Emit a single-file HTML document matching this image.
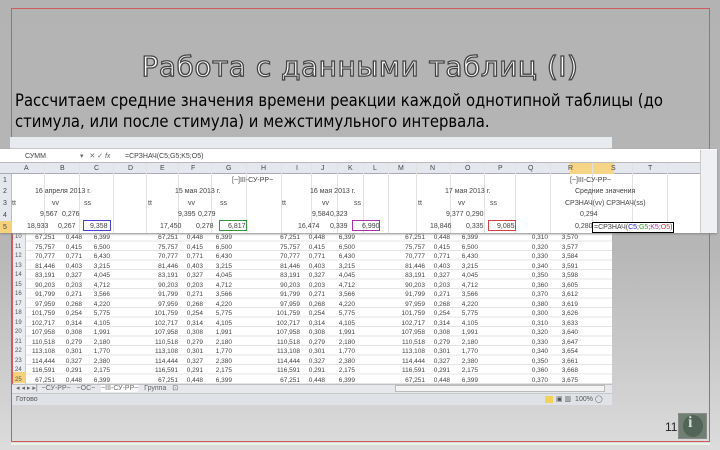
<!DOCTYPE html>
<html><head><meta charset="utf-8"><style>
*{margin:0;padding:0;box-sizing:border-box}
body{width:720px;height:450px;overflow:hidden;position:relative;font-family:"Liberation Sans",sans-serif;background:linear-gradient(#b3b3b3 0,#b6b6b6 55%,#cfcfcf 85%,#dcdcdc 100%)}
.abs{position:absolute}
.title{left:0;width:720px;top:50px;text-align:center;font-size:28px;color:#fff;font-weight:normal;letter-spacing:0.5px;-webkit-text-stroke:1.3px #444;font-family:"DejaVu Sans","Liberation Sans",sans-serif}
.body{left:15px;top:90px;font-size:16.5px;line-height:21px;color:#000;font-family:"DejaVu Sans Condensed","Liberation Sans Narrow","Liberation Sans",sans-serif;letter-spacing:0px}
.sheet{background:#fff}
.t{position:absolute;font-size:7px;color:#444;white-space:nowrap;line-height:9px}
.r{text-align:right}
</style></head><body>
<div class="abs" style="left:11px;top:8px;width:699px;height:434px;border:1.5px solid #cf5b5b"></div>
<div class="abs" style="left:11px;top:443px;width:699px;height:2px;background:#eaf3ea"></div>
<div class="abs title">Работа с данными таблиц (I)</div>
<div class="abs body">Рассчитаем средние значения времени реакции каждой однотипной таблицы (до<br>стимула, или после стимула) и межстимульного интервала.</div>

<div class="abs" style="left:10px;top:137px;width:602px;height:12px;background:#e7eaee;border-bottom:1px solid #ccc"></div>

<div class="abs sheet" style="left:12px;top:232px;width:600px;height:152px;background:#fff;background-image:repeating-linear-gradient(#fff 0,#fff 8.5px,#e4e4e4 8.5px,#e4e4e4 9.5px)"></div>
<div class="abs" style="left:11px;top:232px;width:2px;height:152px;background:#cf5b5b"></div>
<div class="abs" style="left:13px;top:232px;width:13px;height:152px;background:#e9ecf0;border-right:1px solid #c8c8c8"></div>
<div class="abs" style="left:13px;top:372px;width:13px;height:11px;background:#f6d17c"></div>
<div id="rows"></div>
<div class="abs" style="left:12px;top:384px;width:600px;height:9px;background:#e6e8ec;border-top:1px solid #c0c0c0"></div>
<div class="t" style="left:16px;top:384px;color:#666">◂ ◂ ▸ ▸| &nbsp;~СУ-РР~ &nbsp; ~ОС~ &nbsp; <span style="background:#fff">~III-СУ-РР~</span> &nbsp; Группа &nbsp; ⊡</div>
<div class="abs" style="left:395px;top:385px;width:210px;height:7px;background:#f4f4f4;border:1px solid #bbb"></div>
<div class="abs" style="left:12px;top:393px;width:600px;height:12px;background:#dfe2e6;border-top:1px solid #c8c8c8"></div>
<div class="t" style="left:16px;top:395px;color:#555">Готово</div>
<div class="abs" style="left:545px;top:396px;width:8px;height:7px;background:#f3d25a"></div>
<div class="t" style="left:556px;top:395px;color:#555">▣ ▥ &nbsp;100% ◯</div>

<div class="abs" style="left:0;top:149px;width:717px;height:84px;background:#fff;box-shadow:0 1px 2px #888"></div>
<div class="abs" style="left:0;top:149px;width:717px;height:14px;background:#fff;border-bottom:1px solid #bbb"></div>
<div class="t" style="left:25px;top:152px">СУММ</div>
<div class="t" style="left:80px;top:152px;color:#666">▾ &nbsp; ✕ ✓ <i>fx</i></div>
<div class="t" style="left:125px;top:152px">=СРЗНАЧ(C5;G5;K5;O5)</div>
<div class="abs" style="left:700px;top:150px;width:17px;height:83px;background:#eef0f3;border-left:1px solid #ccc"></div>
<div class="abs" style="left:0;top:163px;width:700px;height:11px;background:#e4e8ee;border-bottom:1px solid #aab"></div>
<div class="abs" style="left:570px;top:163px;width:44px;height:11px;background:#f7d587"></div>
<div id="cols"></div>
<div class="abs" style="left:0;top:174px;width:12px;height:59px;background:#e4e8ee;border-right:1px solid #bbb"></div>
<div class="abs" style="left:0;top:221px;width:12px;height:12px;background:#f6d17c"></div>
<div id="ov"></div>

<div class="abs" style="left:665px;top:420px;font-size:12px;color:#222">11</div>
<div class="abs" style="left:678px;top:413px;width:29px;height:26px;background:#6f7f72;border:1px solid #8a8a8a"></div>
<div class="abs" style="left:683px;top:415px;width:20px;height:22px;border-radius:50%;background:#516456"></div>
<div class="abs" style="left:688px;top:414px;font-size:16px;color:#d6ddd6;font-family:'Liberation Serif',serif;font-weight:bold">i</div>

<script>
var cx=[26,62,96,130,162,193,228,263,298,323,350,375,400,432,467,500,530,570,613,650,683];
var L="ABCDEFGHIJKLMNOPQRST";
var h='';
for(var i=0;i<20;i++){h+='<div class="t" style="left:'+(cx[i]-2)+'px;top:164px;color:#444">'+L[i]+'</div>';h+='<div class="abs" style="left:'+((cx[i]+cx[i+1])/2)+'px;top:163px;width:1px;height:70px;background:#e2e2e2"></div>';}
document.getElementById('cols').innerHTML=h;
var o='';
for(var r=1;r<=5;r++)o+='<div class="t" style="left:3px;top:'+(164+r*11.7)+'px;color:#444">'+r+'</div>';
function T(x,y,s,c){o+='<div class="t" style="left:'+x+'px;top:'+y+'px;'+(c||'')+'">'+s+'</div>';}
T(232,176,'[~]III-СУ-РР~');T(570,176,'[~]III-СУ-РР~');
T(35,187,'16 апреля 2013 г.');T(175,187,'15 мая 2013 г.');T(310,187,'16 мая 2013 г.');T(445,187,'17 мая 2013 г.');T(575,187,'Средние значения');
var hd=[12,148,282,418];for(var k of hd){T(k,199,'tt');T(k+40,199,'vv');T(k+72,199,'ss');}
T(565,199,'СРЗНАЧ(vv) СРЗНАЧ(ss)');
T(40,210,'9,567');T(62,210,'0,276');T(178,210,'9,395');T(198,210,'0,279');T(312,210,'9,584');T(330,210,'0,323');T(446,210,'9,377');T(466,210,'0,290');T(580,210,'0,294');
T(27,222,'18,933');T(58,222,'0,267');T(90,222,'9,358');T(160,222,'17,450');T(196,222,'0,278');T(228,222,'6,817');T(298,222,'16,474');T(330,222,'0,339');T(362,222,'6,990');T(430,222,'18,846');T(466,222,'0,335');T(497,222,'9,085');T(575,222,'0,280');
T(592,222,'=СРЗНАЧ(<span style="color:#22c">C5</span>;<span style="color:#393">G5</span>;<span style="color:#a3a">K5</span>;<span style="color:#c44">O5</span>)','background:#fff;border:1px solid #000;padding:0 1px');
o+='<div class="abs" style="left:83px;top:220px;width:28px;height:11px;border:1px solid #44c"></div>';
o+='<div class="abs" style="left:219px;top:220px;width:28px;height:11px;border:1px solid #393"></div>';
o+='<div class="abs" style="left:352px;top:220px;width:28px;height:11px;border:1px solid #a3a"></div>';
o+='<div class="abs" style="left:488px;top:220px;width:28px;height:11px;border:1px solid #c44"></div>';
document.getElementById('ov').innerHTML=o;
var re=[55,82,110,178,203,232,300,325,355,425,450,478,548,578];
var v=[['67,251','0,448','6,399'],['75,757','0,415','6,500'],['70,777','0,771','6,430'],['81,446','0,403','3,215'],['83,191','0,327','4,045'],['90,203','0,203','4,712'],['91,799','0,271','3,566'],['97,959','0,268','4,220'],['101,759','0,254','5,775'],['102,717','0,314','4,105'],['107,958','0,308','1,991'],['110,518','0,279','2,180'],['113,108','0,301','1,770'],['114,444','0,327','2,380'],['116,591','0,291','2,175']];
var w='';
for(var r=10;r<=25;r++){var y=233+(r-10)*9.5;w+='<div class="t" style="left:15px;top:'+y+'px;color:#555;font-size:6px">'+r+'</div>';
var row=v[(r-10)%v.length];
for(var j=0;j<re.length;j++){var s=row[j%3];if(j>=12)s=j==12?'0,3'+(r%9)+'0':'3,'+(500+r*7);w+='<div class="t r" style="left:'+(re[j]-30)+'px;width:30px;top:'+y+'px;font-size:6.5px">'+s+'</div>';}}
document.getElementById('rows').innerHTML=w;
</script>
</body></html>
